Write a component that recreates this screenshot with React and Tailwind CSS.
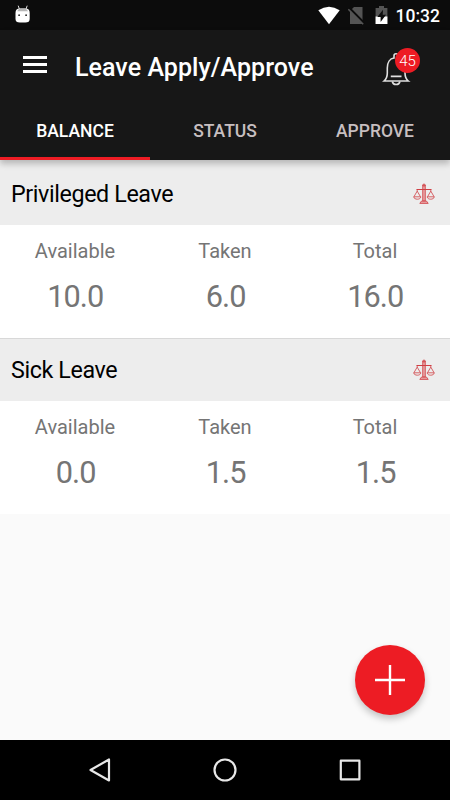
import React, { useState } from 'react';

const tabs = ['BALANCE', 'STATUS', 'APPROVE'];

const leaves = [
  { name: 'Privileged Leave', available: '10.0', taken: '6.0', total: '16.0' },
  { name: 'Sick Leave', available: '0.0', taken: '1.5', total: '1.5' },
];

const ScaleIcon = () => (
  <svg width="22" height="22" viewBox="0 0 22 22" fill="none" stroke="#cf3f44" strokeWidth="0.8">
    <path d="M9.7 2h2.6v16H9.7z" fill="#e8a3a5" />
    <circle cx="11" cy="2.1" r="1.1" />
    <path d="M3.5 6.5h15" strokeWidth="1" />
    <path d="M4.2 6.5v1.6L1 13.6M4.2 8.1l3.2 5.5M17.8 6.5v1.6l-3.2 5.5M17.8 8.1l3.2 5.5" />
    <path d="M.7 13.8h7.2c-.4 3.2-6.8 3.2-7.2 0zM14.1 13.8h7.2c-.4 3.2-6.8 3.2-7.2 0z" />
    <path d="M8.3 18.2h5.4l1.5 2.2H6.8z" fill="#e8a3a5" />
  </svg>
);

const StatusBar = () => (
  <div className="flex h-[30px] items-center bg-[#0c0c0c] text-white">
    <svg className="ml-[15px]" width="16" height="20" viewBox="0 0 16 20">
      <path d="M3.2.7l1.4 4M12.2.7l-1.4 4" stroke="#ddd" strokeWidth="1" />
      <path d="M.5 8q0-4.4 4.4-4.4h5.4q4.4 0 4.4 4.4v6q0 3.6-4.4 3.6H4.9Q.5 17.6.5 14z" fill="#fff" />
      <path d="M2.2 6.3q1-2.7 3.4-2.7h4q2.4 0 3.4 2.7z" fill="#b5b5b5" />
      <circle cx="4.1" cy="10.2" r=".9" fill="#222" />
      <circle cx="11.1" cy="10.2" r=".9" fill="#222" />
    </svg>
    <svg className="ml-auto" width="22" height="19" viewBox="0 0 22 19">
      <path d="M11 18.2L.3 4.3Q11-3 21.7 4.3z" fill="#fff" />
    </svg>
    <svg className="ml-[8px]" width="17" height="19" viewBox="0 0 17 19">
      <path d="M6 1h8.5v17H2V5z" fill="#545454" />
      <path d="M1.2 1.8l15.4 15.6" stroke="#0c0c0c" strokeWidth="2.2" />
      <path d="M.3 3.2l14.9 15" stroke="#545454" strokeWidth="1.6" />
    </svg>
    <svg className="ml-[10px]" width="13" height="20" viewBox="0 0 13 20">
      <path d="M4 1h5v2h3.4v16H.6V3H4z" fill="#545454" />
      <path d="M.6 11.5h11.8V19H.6z" fill="#fff" />
      <path d="M8 4.7L2.3 11.9h3.3v5L11 9.8H7.7z" fill="#0c0c0c" />
    </svg>
    <span className="ml-[8px] mr-[10px] mt-[2px] text-[17.5px] font-medium leading-5">10:32</span>
  </div>
);

const Toolbar = () => (
  <div className="flex h-[72px] items-center pt-px">
    <button className="ml-[23px] flex w-6 flex-col gap-1 pb-1">
      <span className="h-[3px] w-full bg-white" />
      <span className="h-[3px] w-full bg-white" />
      <span className="h-[3px] w-full bg-white" />
    </button>
    <h1 className="ml-[28px] mt-[2px] text-[25px] font-medium leading-8 tracking-[0.06px] text-white">Leave Apply/Approve</h1>
    <div className="relative ml-auto mr-[30px] mt-px h-[38px] w-[38px]">
      <svg width="30" height="38" viewBox="0 0 30 38" fill="none" stroke="#e0e0e0" strokeWidth="1.6">
        <path d="M2 33c2.4-2 3.3-4 3.3-8v-5c0-5.5 2.6-9.5 6.7-10V7.8q0-2 2-2t2 2V10c4.2.5 7 4.5 7 10v5c0 4 .8 6 3.3 8z" />
        <path d="M10.3 33.5q.5 3 3.8 3t3.8-3M8.8 28.4h10.7" />
      </svg>
      <span className="absolute left-[13px] top-0 flex h-[25px] w-[25px] items-center justify-center rounded-full bg-[#ed1c24] text-[15px] font-light leading-5 text-white">45</span>
    </div>
  </div>
);

const Cell = ({ label, value }) => (
  <div className="flex flex-1 flex-col items-center pt-[13px] text-[#757575]">
    <span className="text-[20px] leading-[26px]">{label}</span>
    <span className="mt-[13px] scale-x-[0.96] pl-px text-[32px] leading-[38px] tracking-[-1px]">{value}</span>
  </div>
);

const App = () => {
  const [active, setActive] = useState('BALANCE');

  return (
    <div className="flex h-[800px] w-[450px] flex-col overflow-hidden bg-[#fafafa] font-[Roboto,sans-serif]">
      <StatusBar />

      {/* Toolbar + tabs */}
      <header className="relative z-10 h-[130px] bg-[#171717] shadow-[0_4px_6px_rgba(0,0,0,0.22)]">
        <Toolbar />
        <nav className="flex h-[58px]">
          {tabs.map((tab) => (
            <button
              key={tab}
              onClick={() => setActive(tab)}
              className={
                active === tab
                  ? 'flex-1 border-b-[3px] border-[#ed1c24] pt-[4px] text-[17.5px] font-medium text-white'
                  : 'flex-1 border-b-[3px] border-transparent pt-[4px] text-[17.5px] font-medium text-[#c7bfc0]'
              }
            >
              {tab}
            </button>
          ))}
        </nav>
      </header>

      {/* Leave balances */}
      <main className="flex-1">
        {leaves.map((leave, i) => (
          <section key={leave.name}>
            <div
              className={
                i === 0
                  ? 'flex h-[65px] items-center justify-between bg-[#ededed] pl-[11px] pr-[15px] pt-[3px]'
                  : 'flex h-[63px] items-center justify-between border-t border-[#d8d8d8] bg-[#ededed] pl-[11px] pr-[15px]'
              }
            >
              <h2 className="origin-left scale-x-[0.97] text-[24px] leading-8 tracking-[-0.4px] text-black">{leave.name}</h2>
              <ScaleIcon />
            </div>
            <div className="flex h-[113px] bg-white">
              <Cell label="Available" value={leave.available} />
              <Cell label="Taken" value={leave.taken} />
              <Cell label="Total" value={leave.total} />
            </div>
          </section>
        ))}
      </main>

      {/* Add button */}
      <button className="mb-[25px] mr-[25px] flex h-[70px] w-[70px] items-center justify-center self-end rounded-full bg-[#ed1c24] shadow-[0_4px_7px_rgba(0,0,0,0.22)]">
        <svg width="30" height="30" viewBox="0 0 30 30" stroke="#fff" strokeWidth="2.4">
          <path d="M15 0v30M0 15h30" />
        </svg>
      </button>

      {/* Android navigation */}
      <footer className="flex h-[60px] items-center justify-center gap-[101px] bg-black">
        <svg width="24" height="24" viewBox="0 0 24 24" fill="none" stroke="#e8e8e8" strokeWidth="2.2" strokeLinejoin="round">
          <path d="M21 1.5v21L2.5 12z" />
        </svg>
        <svg width="24" height="24" viewBox="0 0 24 24" fill="none" stroke="#e8e8e8" strokeWidth="2.2">
          <circle cx="12" cy="12" r="10.5" />
        </svg>
        <svg width="24" height="24" viewBox="0 0 24 24" fill="none" stroke="#e8e8e8" strokeWidth="2.2" strokeLinejoin="round">
          <rect x="2.8" y="2.7" width="18.6" height="18.6" />
        </svg>
      </footer>
    </div>
  );
};

export default App;
